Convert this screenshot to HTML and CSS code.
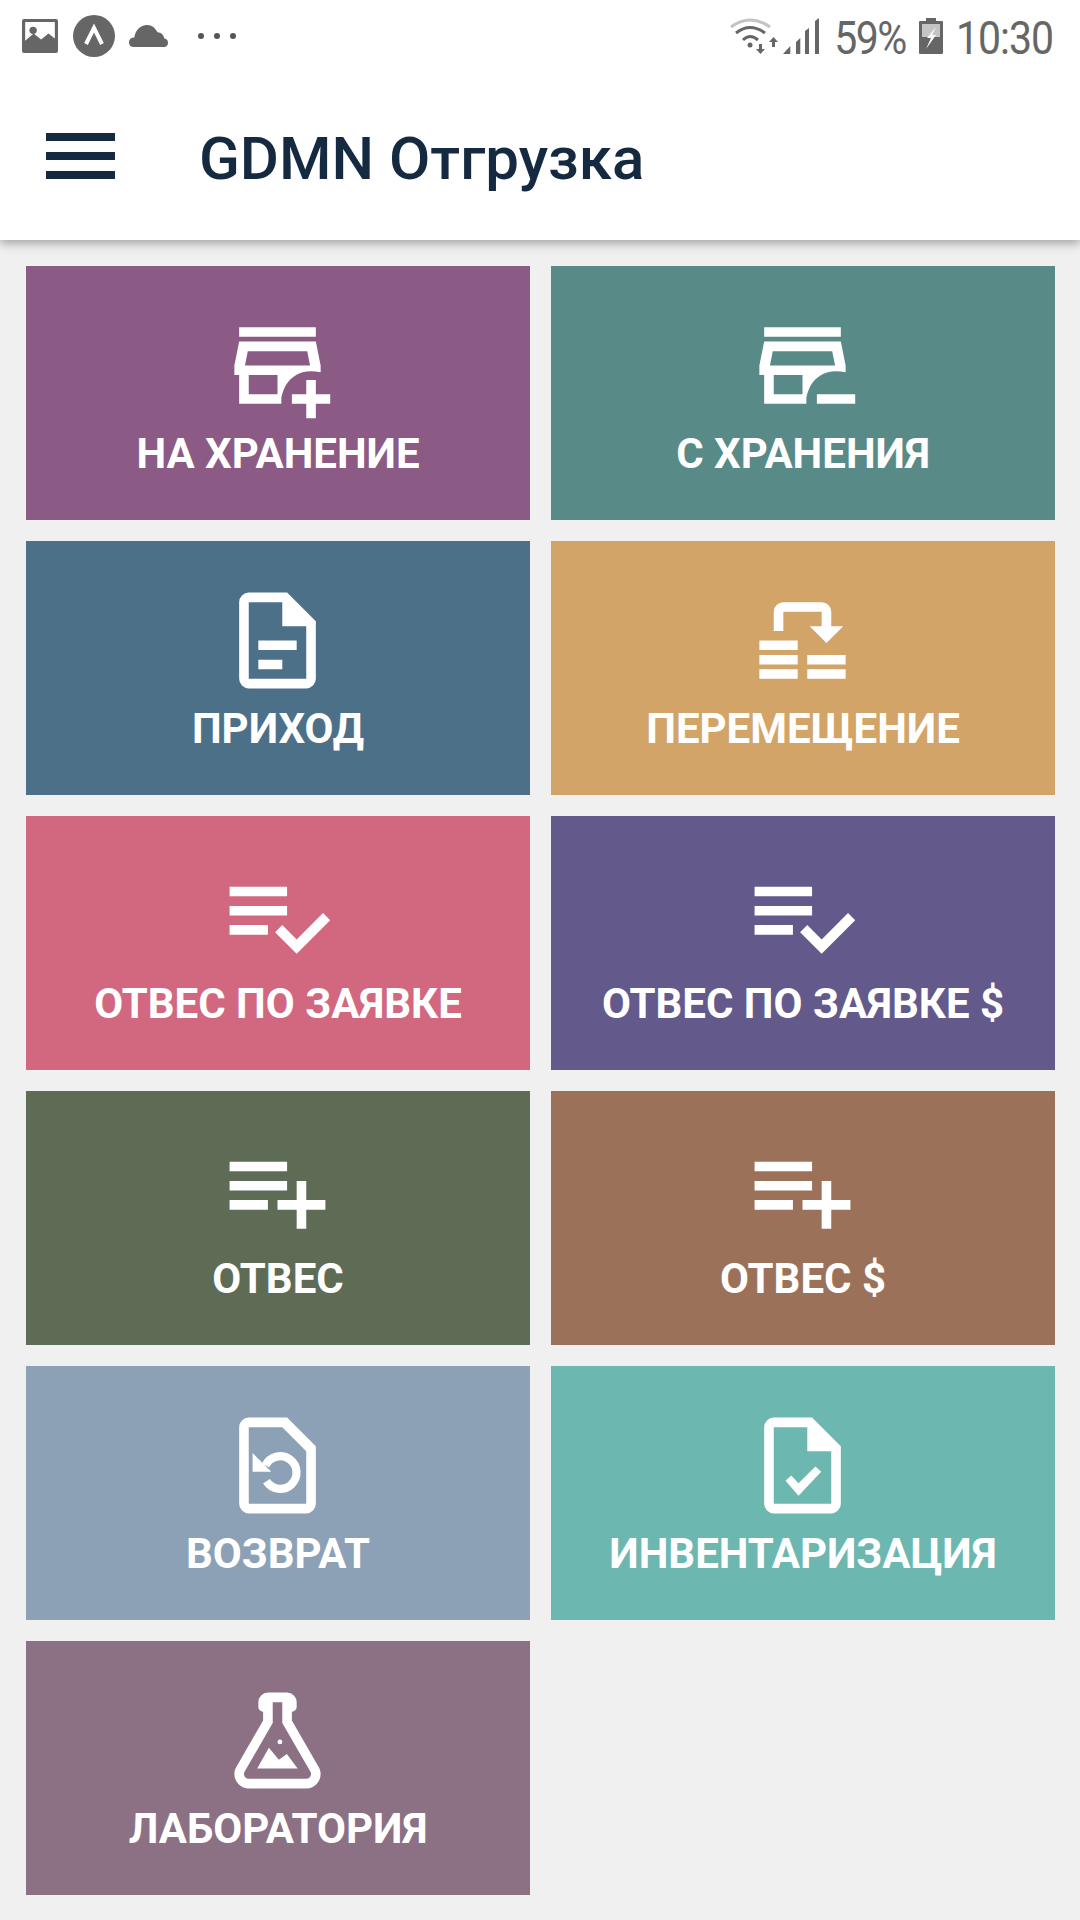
FILE: index.html
```html
<!DOCTYPE html>
<html lang="ru">
<head>
  <meta charset="UTF-8" />
  <title>GDMN Отгрузка</title>
  <link rel="stylesheet" href="styles.css">
</head>
<body>

  <header class="header">
    <div class="status">
      <svg class="st-image" viewBox="0 0 34 33" preserveAspectRatio="none"><rect width="34" height="33" rx="2" fill="#666"/><path d="M3 3H31V19L25 14L18 20L11 14L3 21Z" fill="#fff"/><circle cx="10.500" cy="11" r="3.500" fill="#666"/></svg>
      <svg class="st-app" viewBox="0 0 42 42"><circle cx="21" cy="21" r="21" fill="#666"/><path d="M13 29L21 13L29 29" fill="none" stroke="#fff" stroke-width="4"/></svg>
      <svg class="st-cloud" viewBox="0 0 37 21" preserveAspectRatio="none"><path d="M4 21C1 21 0 18.500 0 16.500C0 13.500 2 12 5 12C6 5 11 0 17 0C22 0 25 3 27 7C31 7 33 10 33.500 13C36 13.500 37 15 37 17C37 20 35 21 33 21Z" fill="#666"/></svg>
      <div class="dots"><span></span><span></span><span></span></div>

      <svg class="st-wifi" viewBox="0 0 48 36">
        <path d="M1 9Q20 -5 40 9" fill="none" stroke="#c4c4c4" stroke-width="3"/>
        <path d="M6 15Q20 4 35 15" fill="none" stroke="#666" stroke-width="3"/>
        <path d="M13 22Q20 15 28 22" fill="none" stroke="#666" stroke-width="3"/>
        <circle cx="20" cy="27" r="2.500" fill="#666"/>
        <path d="M29 26H32V31H35L30.500 36L26 31H29Z M42 29H45V24H48L43.500 19L39 24H42Z" fill="#666"/>
      </svg>
      <svg class="st-signal" viewBox="0 0 36 36"><path d="M0 36L7.300 28V36Z M13 36V24L17.300 20V36Z M22 36V13L26 10V36Z M32 36V3L36 0V36Z" fill="#666"/></svg>
      <span class="st-text st-percent">59%</span>
      <svg class="st-battery" viewBox="0 0 24 36"><path d="M7 0H17V3H23A1 1 0 0 1 24 4V35A1 1 0 0 1 23 36H1A1 1 0 0 1 0 35V4A1 1 0 0 1 1 3H7Z" fill="#666"/><rect x="3" y="6" width="18" height="13" fill="#c4c4c4"/><path d="M17 9L8 20H12L7 31L17 17H13Z" fill="#fff"/></svg>
      <span class="st-text st-time">10:30</span>
    </div>

    <div class="toolbar">
      <div class="burger"><span></span><span></span><span></span></div>
      <h1 class="title">GDMN Отгрузка</h1>
    </div>
  </header>

  <main class="grid">
    <a class="tile t-purple">
      <svg class="icon" viewBox="0 0 24 24"><path fill-rule="evenodd" d="M4 4H20V6H4Z M4 7H20L21 12V13.400C19 13 17 13.200 15.900 14C14.200 15 13.300 16.500 12.800 18.700V20H4V14H3V12Z M5.800 9L5.200 12H18.800L18.200 9Z M6 14V18H12V14Z M18 15H20V18H23V20H20V23H18V20H15V18H18Z"/></svg>
      <span class="label">НА ХРАНЕНИЕ</span>
    </a>
    <a class="tile t-teal">
      <svg class="icon" viewBox="0 0 24 24"><path fill-rule="evenodd" d="M4 4H20V6H4Z M4 7H20L21 12V13.400C19 13 17 13.200 15.900 14C14.200 15 13.300 16.500 12.800 18.700V20H4V14H3V12Z M5.800 9L5.200 12H18.800L18.200 9Z M6 14V18H12V14Z M15 18H23V20H15Z"/></svg>
      <span class="label">С ХРАНЕНИЯ</span>
    </a>
    <a class="tile t-blue">
      <svg class="icon" viewBox="0 0 24 24"><path d="M6,2A2,2 0 0,0 4,4V20A2,2 0 0,0 6,22H18A2,2 0 0,0 20,20V8L14,2H6M6,4H13V9H18V20H6V4M8,12V14H16V12H8M8,16V18H13V16H8Z"/></svg>
      <span class="label">ПРИХОД</span>
    </a>
    <a class="tile t-tan">
      <svg class="icon" viewBox="0 0 24 24"><path d="M3 12H11V14H3Z M3 15H11V17H3Z M3 18H11V20H3Z M13 15H21V17H13Z M13 18H21V20H13Z M6 10V6A2 2 0 0 1 8 4H16A2 2 0 0 1 18 6V9H20.500L17 12.500L13.500 9H16V6H8V10Z"/></svg>
      <span class="label">ПЕРЕМЕЩЕНИЕ</span>
    </a>
    <a class="tile t-pink">
      <svg class="icon" viewBox="0 0 24 24"><path d="M14,10H2V12H14V10M14,6H2V8H14V6M2,16H10V14H2V16M21.500,11.500L23,13L16,20L11.500,15.500L13,14L16,17L21.500,11.500Z"/></svg>
      <span class="label">ОТВЕС ПО ЗАЯВКЕ</span>
    </a>
    <a class="tile t-indigo">
      <svg class="icon" viewBox="0 0 24 24"><path d="M14,10H2V12H14V10M14,6H2V8H14V6M2,16H10V14H2V16M21.500,11.500L23,13L16,20L11.500,15.500L13,14L16,17L21.500,11.500Z"/></svg>
      <span class="label">ОТВЕС ПО ЗАЯВКЕ $</span>
    </a>
    <a class="tile t-green">
      <svg class="icon" viewBox="0 0 24 24"><path d="M14,10H2V12H14V10M14,6H2V8H14V6M18,14V10H16V14H12V16H16V20H18V16H22V14H18M2,16H10V14H2V16Z"/></svg>
      <span class="label">ОТВЕС</span>
    </a>
    <a class="tile t-brown">
      <svg class="icon" viewBox="0 0 24 24"><path d="M14,10H2V12H14V10M14,6H2V8H14V6M18,14V10H16V14H12V16H16V20H18V16H22V14H18M2,16H10V14H2V16Z"/></svg>
      <span class="label">ОТВЕС $</span>
    </a>
    <a class="tile t-grey">
      <svg class="icon" viewBox="0 0 24 24">
        <path d="M6,2A2,2 0 0,0 4,4V20A2,2 0 0,0 6,22H18A2,2 0 0,0 20,20V8L14,2H6M6,4H13L18,9V20H6V4Z"/>
        <path d="M6.800 9.400V13.300H10.700Z"/>
        <path d="M9.500 12A3.400 3.400 0 1 1 9.700 15.300" fill="none" stroke="#fff" stroke-width="1.700"/>
      </svg>
      <span class="label">ВОЗВРАТ</span>
    </a>
    <a class="tile t-mint">
      <svg class="icon" viewBox="0 0 24 24"><path d="M6,2A2,2 0 0,0 4,4V20A2,2 0 0,0 6,22H18A2,2 0 0,0 20,20V8L14,2H6M6,4H13V9H18V20H6V4Z M8.460 15.200L9.640 14.100L11.170 15.700L14.700 12.200L15.900 13.300L11.170 18.300Z"/></svg>
      <span class="label">ИНВЕНТАРИЗАЦИЯ</span>
    </a>
    <a class="tile t-mauve">
      <svg class="icon" viewBox="0 0 24 24">
        <path fill-rule="evenodd" d="M5,19A1,1 0 0,0 6,20H18A1,1 0 0,0 19,19C19,18.790 18.930,18.590 18.820,18.430L13,8.350V4H11V8.350L5.180,18.430C5.070,18.590 5,18.790 5,19M6,22A3,3 0 0,1 3,19C3,18.400 3.180,17.840 3.500,17.350L9,7.810V6A1,1 0 0,1 8,5V4A2,2 0 0,1 10,2H14A2,2 0 0,1 16,4V5A1,1 0 0,1 15,6V7.810L20.500,17.350C20.820,17.840 21,18.400 21,19A3,3 0 0,1 18,22H6Z"/>
        <circle cx="12.500" cy="12.300" r="0.500"/>
        <path d="M7.760 17.850L10.200 13.500L12.280 16L13.950 14.800L16.200 17.850Z"/>
      </svg>
      <span class="label">ЛАБОРАТОРИЯ</span>
    </a>
  </main>

</body>
</html>
```

FILE: styles.css
```css
html, body {
  margin: 0;
  height: 100%;
}
body {
  font-family: Roboto, "Noto Sans", sans-serif;
  background: #f0f0f0;
}
.header {
  position: relative;
  background: #fff;
  box-shadow: 0 3px 10px rgba(0, 0, 0, 0.35);
}

/* status bar */
.status {
  display: flex;
  align-items: center;
  height: 72px;
  padding: 0 27px 0 22px;
  color: #666;
}
.st-image { width: 36px; height: 34px; }
.st-app { width: 42px; height: 42px; margin-left: 15px; }
.st-cloud { width: 39px; height: 22px; margin-left: 14px; }
.dots {
  display: flex;
  gap: 10px;
  margin-left: 30px;
}
.dots span {
  width: 6px;
  height: 6px;
  border-radius: 50%;
  background: #555;
}
.st-wifi { width: 48px; height: 36px; margin-left: auto; }
.st-signal { width: 36px; height: 36px; margin-left: 5px; }
.st-battery { width: 24px; height: 36px; margin-left: 13px; }
.st-text {
  display: inline-block;
  margin-top: 4px;
  font-size: 41px;
  letter-spacing: -1px;
  line-height: 68px;
  transform: scaleY(1.12);
}
.st-percent { margin-left: 15px; letter-spacing: -1.5px; }
.st-time { margin-left: 13px; }

/* toolbar */
.toolbar {
  display: flex;
  align-items: center;
  height: 168px;
  padding-left: 46px;
}
.burger {
  display: flex;
  flex-direction: column;
  gap: 11px;
  width: 69px;
}
.burger span {
  height: 8px;
  background: #152a40;
}
.title {
  margin: 5px 0 0 84px;
  font-size: 60px;
  font-weight: 500;
  color: #152a40;
}

/* tiles */
.grid {
  display: grid;
  grid-template-columns: 1fr 1fr;
  gap: 21px;
  padding: 26px 25px 0 26px;
}
.tile {
  display: flex;
  flex-direction: column;
  align-items: center;
  height: 254px;
  padding-top: 42px;
  box-sizing: border-box;
  color: #fff;
}
.icon {
  width: 115px;
  height: 115px;
  margin-right: 1px;
  fill: #fff;
}
.label {
  margin-top: 9px;
  font-size: 42px;
  font-weight: 700;
  line-height: 44px;
}
.t-purple { background: #8b5a85; }
.t-teal { background: #588a87; }
.t-blue { background: #4d7089; }
.t-tan { background: #d3a468; }
.t-pink { background: #d2687f; }
.t-indigo { background: #635a8b; }
.t-green { background: #5e6c56; }
.t-brown { background: #9c7159; }
.t-grey { background: #8ca1b5; }
.t-mint { background: #6cb7b0; }
.t-mauve { background: #8c7185; }
```
